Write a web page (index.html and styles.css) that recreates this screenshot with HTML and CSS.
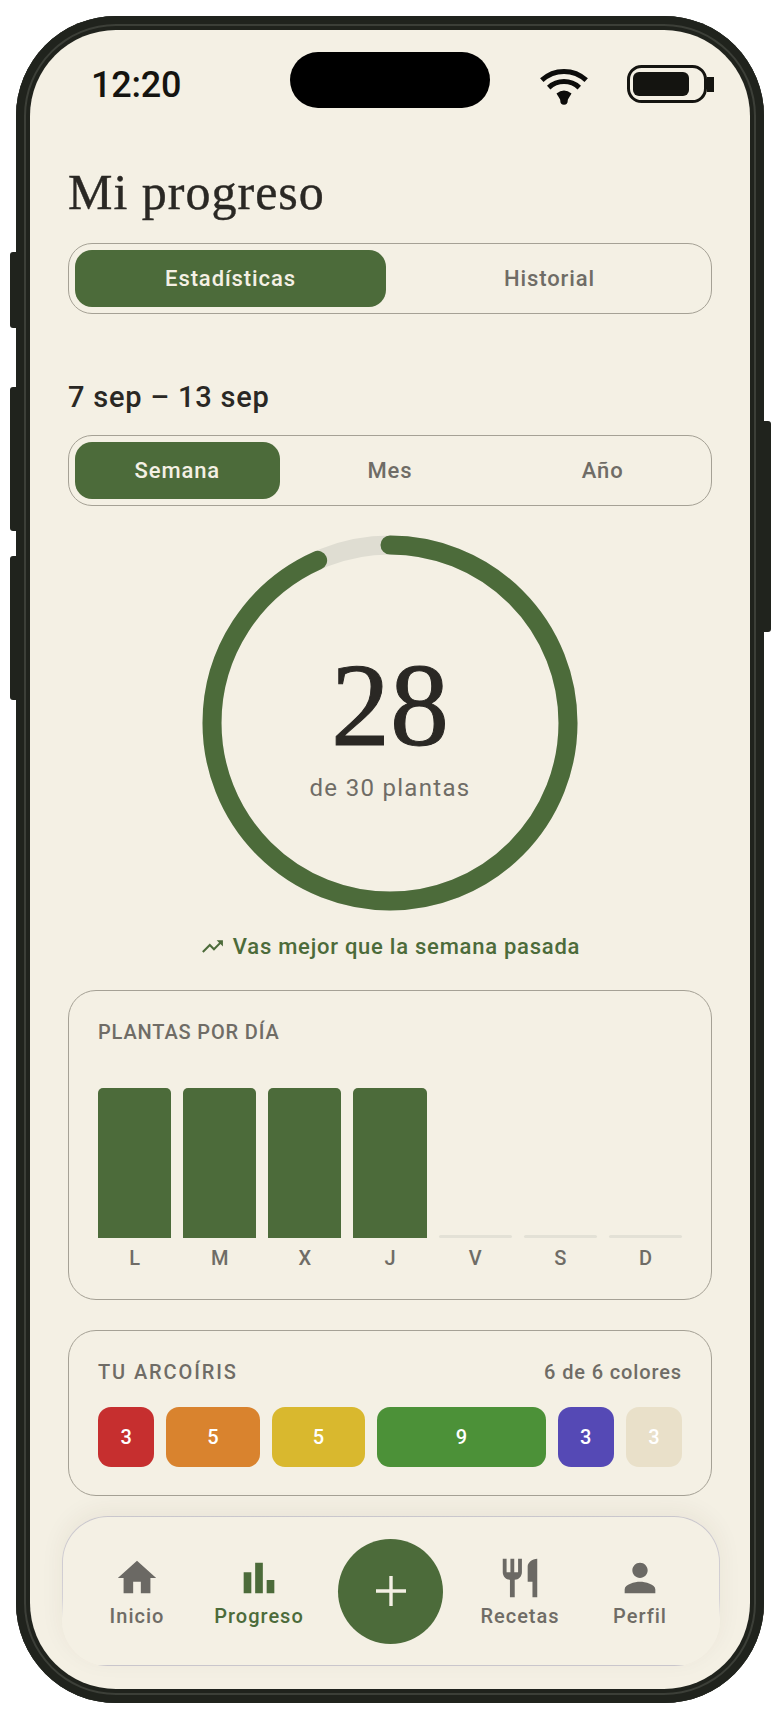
FILE: index.html
```html
<!DOCTYPE html>
<html lang="es">
<head>
<meta charset="utf-8">
<title>Mi progreso</title>
<link rel="stylesheet" href="styles.css">
</head>
<body>
<div class="phone">
  <span class="side-btn side-a"></span>
  <span class="side-btn side-b"></span>
  <span class="side-btn side-c"></span>
  <span class="side-btn side-r"></span>
  <div class="screen">
    <header class="status">
      <div class="time">12:20</div>
      <div class="island"></div>
      <div class="status-icons">
        <svg class="wifi" viewBox="0 0 46 36" width="46" height="36">
          <path class="wifi-arc" d="M.8 11.200 A32.500 32.500 0 0 1 45.200 11.200"/>
          <path class="wifi-arc" d="M7.700 18.600 A22.500 22.500 0 0 1 38.300 18.600"/>
          <path class="wifi-fill" d="M15.500 24.500 Q23 18.500 30.500 24.500 L26 32 L20 32 Z"/>
          <circle class="wifi-fill" cx="23" cy="32" r="3.700"/>
        </svg>
        <svg class="battery" viewBox="0 0 87 38" width="87" height="38">
          <rect class="batt-case" x="1.500" y="1.500" width="77" height="35" rx="13"/>
          <rect class="batt-fill" x="6" y="7" width="56" height="24" rx="6"/>
          <rect class="batt-fill" x="80" y="12" width="7" height="15"/>
        </svg>
      </div>
    </header>

    <main class="content">
      <h1 class="title">Mi progreso</h1>
      <div class="seg seg-two">
        <div class="seg-item active">Estadísticas</div>
        <div class="seg-item">Historial</div>
      </div>

      <h2 class="date">7 sep – 13 sep</h2>
      <div class="seg seg-three">
        <div class="seg-item active">Semana</div>
        <div class="seg-item">Mes</div>
        <div class="seg-item">Año</div>
      </div>

      <div class="ring">
        <svg class="ring-svg" viewBox="0 0 376 376" width="376" height="376">
          <circle class="ring-track" cx="188" cy="188" r="178"/>
          <circle class="ring-value" cx="188" cy="188" r="178" pathLength="30" stroke-dasharray="28 30" transform="rotate(-90 188 188)"/>
        </svg>
        <div class="ring-text">
          <div class="ring-num">28</div>
          <div class="ring-sub">de 30 plantas</div>
        </div>
      </div>

      <div class="trend">
        <svg class="trend-icon" viewBox="0 0 24 24" width="25" height="25"><path d="M16 6l2.290 2.290-4.880 4.880-4-4L2 16.590 3.410 18l6-6 4 4 6.300-6.290L22 12V6z"/></svg>
        <span>Vas mejor que la semana pasada</span>
      </div>

      <section class="card card-bars">
        <div class="card-title">PLANTAS POR DÍA</div>
        <div class="bars">
          <div class="bar-col"><div class="bar-area"><div class="bar full"></div></div><div class="bar-label">L</div></div>
          <div class="bar-col"><div class="bar-area"><div class="bar full"></div></div><div class="bar-label">M</div></div>
          <div class="bar-col"><div class="bar-area"><div class="bar full"></div></div><div class="bar-label">X</div></div>
          <div class="bar-col"><div class="bar-area"><div class="bar full"></div></div><div class="bar-label">J</div></div>
          <div class="bar-col"><div class="bar-area"><div class="bar empty"></div></div><div class="bar-label">V</div></div>
          <div class="bar-col"><div class="bar-area"><div class="bar empty"></div></div><div class="bar-label">S</div></div>
          <div class="bar-col"><div class="bar-area"><div class="bar empty"></div></div><div class="bar-label">D</div></div>
        </div>
      </section>

      <section class="card card-rainbow">
        <div class="card-head">
          <div class="card-title wide">TU ARCOÍRIS</div>
          <div class="card-note">6 de 6 colores</div>
        </div>
        <div class="rainbow">
          <div class="chip red" style="flex-grow:3">3</div>
          <div class="chip orange" style="flex-grow:5">5</div>
          <div class="chip yellow" style="flex-grow:5">5</div>
          <div class="chip green" style="flex-grow:9">9</div>
          <div class="chip purple" style="flex-grow:3">3</div>
          <div class="chip cream" style="flex-grow:3">3</div>
        </div>
      </section>
    </main>

    <nav class="nav">
      <div class="nav-item">
        <svg class="nav-icon" viewBox="0 0 24 24"><path d="M10 20v-6h4v6h5v-8h3L12 3 2 12h3v8z"/></svg>
        <span>Inicio</span>
      </div>
      <div class="nav-item current">
        <svg class="nav-icon" viewBox="0 0 24 24"><path d="M4 9h4v11H4zm12 4h4v7h-4zm-6-9h4v16h-4z"/></svg>
        <span>Progreso</span>
      </div>
      <div class="fab">
        <svg class="fab-icon" viewBox="0 0 30 30" width="30" height="30"><path d="M13.300 0h3.400v13.300H30v3.400H16.700V30h-3.400V16.700H0v-3.400h13.300z"/></svg>
      </div>
      <div class="nav-item">
        <svg class="nav-icon" viewBox="0 0 24 24"><path d="M11 9H9V2H7v7H5V2H3v7c0 2.120 1.660 3.840 3.750 3.970V22h2.500v-9.030C11.340 12.840 13 11.120 13 9V2h-2v7zm5-3v8h2.500v8H21V2c-2.760 0-5 2.240-5 4z"/></svg>
        <span>Recetas</span>
      </div>
      <div class="nav-item">
        <svg class="nav-icon" viewBox="0 0 24 24"><path d="M12 12c2.210 0 4-1.790 4-4s-1.790-4-4-4-4 1.790-4 4 1.790 4 4 4zm0 2c-2.670 0-8 1.340-8 4v2h16v-2c0-2.660-5.330-4-8-4z"/></svg>
        <span>Perfil</span>
      </div>
    </nav>
  </div>
</div>
</body>
</html>
```

FILE: styles.css
```css
* { box-sizing: border-box; }
html, body { margin: 0; background: #fff; }
body {
  padding: 16px;
  font-family: Roboto, "Liberation Sans", sans-serif;
  color: #2a2824;
}

.phone {
  position: relative;
  width: 748px;
  height: 1687px;
  padding: 14px;
  border-radius: 100px;
  background: #20231d;
  box-shadow: inset 0 0 0 8px #20231d, inset 0 0 0 10px #3c3f38;
}
.side-btn { position: absolute; width: 7px; background: #20231d; }
.side-a { left: -6px; top: 236px; height: 76px; border-radius: 3px 0 0 3px; }
.side-b { left: -6px; top: 371px; height: 144px; border-radius: 3px 0 0 3px; }
.side-c { left: -6px; top: 540px; height: 144px; border-radius: 3px 0 0 3px; }
.side-r { right: -7px; top: 405px; height: 211px; border-radius: 0 3px 3px 0; }

.screen {
  height: 1659px;
  border-radius: 86px;
  background: #f4f0e4;
  overflow: hidden;
}

.status {
  display: grid;
  grid-template-columns: 1fr 200px 1fr;
  align-items: center;
  padding-top: 22px;
}
.time {
  padding-left: 61px;
  font-size: 36px;
  font-weight: 500;
  letter-spacing: -0.2px;
  color: #141410;
  margin-top: 9px;
}
.island { height: 56px; border-radius: 28px; background: #000; }
.status-icons {
  display: flex;
  justify-content: flex-end;
  align-items: center;
  gap: 40px;
  padding-right: 36px;
  margin-top: 8px;
}
.wifi { margin-top: 5px; overflow: visible; }
.wifi-arc { fill: none; stroke: #0c0c0a; stroke-width: 5; }
.wifi-fill { fill: #0c0c0a; }
.batt-case { fill: none; stroke: #141410; stroke-width: 3; }
.batt-fill { fill: #141410; }

.content { padding: 0 38px; }
.title {
  margin: 54px 0 21px;
  font-family: "Liberation Serif", serif;
  font-size: 50px;
  line-height: 60px;
  font-weight: 400;
  letter-spacing: 1px;
  -webkit-text-stroke: 0.4px #2a2824;
  color: #2a2824;
}

.seg {
  display: grid;
  gap: 8px;
  height: 71px;
  padding: 6px;
  border: 1px solid #a5a195;
  border-radius: 24px;
}
.seg-two { grid-template-columns: 1fr 1fr; }
.seg-three { grid-template-columns: 1fr 1fr 1fr; }
.seg-item {
  display: flex;
  align-items: center;
  justify-content: center;
  border-radius: 17px;
  font-size: 22px;
  font-weight: 500;
  letter-spacing: 0.9px;
  color: #6f6c66;
}
.seg-item.active { background: #4c6b3a; color: #f4f0e4; }

.date {
  margin: 65px 0 20px;
  font-size: 29px;
  line-height: 36px;
  font-weight: 500;
  letter-spacing: 0.8px;
  color: #2a2824;
}

.ring {
  display: grid;
  width: 376px;
  height: 376px;
  margin: 29px auto 0;
}
.ring-svg, .ring-text { grid-area: 1 / 1; }
.ring-track { fill: none; stroke: #dfddd2; stroke-width: 19; }
.ring-value { fill: none; stroke: #4c6b3a; stroke-width: 19; stroke-linecap: round; }
.ring-text {
  display: flex;
  flex-direction: column;
  align-items: center;
  padding-top: 112px;
}
.ring-num {
  font-family: "Liberation Serif", serif;
  font-size: 118px;
  line-height: 118px;
  -webkit-text-stroke: 1px #2a2824;
  color: #2a2824;
}
.ring-sub {
  margin-top: 8px;
  font-size: 24px;
  line-height: 30px;
  letter-spacing: 1.3px;
  color: #6f6c66;
}

.trend {
  display: flex;
  align-items: center;
  justify-content: center;
  gap: 8px;
  height: 28px;
  margin-top: 21px;
  font-size: 22px;
  font-weight: 500;
  letter-spacing: 0.75px;
  color: #4c6b3a;
}
.trend-icon { fill: #4c6b3a; }

.card {
  border: 1px solid #a5a195;
  border-radius: 28px;
  padding: 0 29px;
}
.card-bars { height: 310px; margin-top: 30px; padding-top: 29px; }
.card-rainbow { height: 166px; margin-top: 30px; padding-top: 29px; }
.card-title {
  font-size: 20px;
  line-height: 24px;
  font-weight: 500;
  letter-spacing: 0.85px;
  color: #6f6c66;
}
.card-title.wide { letter-spacing: 1.9px; }
.card-head { display: flex; justify-content: space-between; }
.card-note {
  font-size: 20px;
  line-height: 24px;
  font-weight: 500;
  letter-spacing: 0.87px;
  color: #6f6c66;
}

.bars { display: flex; gap: 12px; margin-top: 44px; }
.bar-col { flex: 1 1 0; display: flex; flex-direction: column; }
.bar-area { height: 150px; display: flex; align-items: flex-end; }
.bar { width: 100%; }
.bar.full { height: 150px; background: #4c6b3a; border-radius: 5px 5px 0 0; }
.bar.empty { height: 3px; background: #e3e1d6; border-radius: 2px; }
.bar-label {
  margin-top: 8px;
  text-align: center;
  font-size: 20px;
  line-height: 24px;
  font-weight: 500;
  color: #6f6c66;
}

.rainbow { display: flex; gap: 12px; margin-top: 23px; }
.chip {
  flex-basis: 0;
  height: 60px;
  display: flex;
  align-items: center;
  justify-content: center;
  border-radius: 13px;
  font-size: 20px;
  font-weight: 500;
  color: #fff;
}
.red { background: #c62f2f; }
.orange { background: #d9832e; }
.yellow { background: #d9b82e; }
.green { background: #4c9138; }
.purple { background: #5549b5; }
.cream { background: #e9e0c9; }

.nav {
  display: grid;
  grid-template-columns: 122px 122px 141px 118px 122px;
  align-items: center;
  height: 150px;
  margin: 20px 30px 0 32px;
  padding-left: 13px;
  border: 1px solid transparent;
  border-radius: 46px;
  background:
    linear-gradient(#f4f0e4, #f4f0e4) padding-box,
    linear-gradient(#c9c6cc 0%, #d4d1d6 55%, #f4f0e4 68%, #f4f0e4 99%, #c9c6cc 99.3%) border-box;
  box-shadow: 0 -6px 24px rgba(60, 55, 40, 0.06);
}
.nav-item {
  display: flex;
  flex-direction: column;
  align-items: center;
  gap: 3px;
  font-size: 20px;
  line-height: 24px;
  font-weight: 500;
  letter-spacing: 1px;
  color: #6f6c66;
}
.nav-icon { width: 46px; height: 46px; fill: #6b6964; }
.nav-item.current { color: #4c6b3a; }
.nav-item.current .nav-icon { fill: #4c6b3a; }
.fab {
  justify-self: center;
  display: flex;
  align-items: center;
  justify-content: center;
  width: 105px;
  height: 105px;
  border-radius: 50%;
  background: #4c6b3a;
}
.fab-icon { fill: #f4f0e4; }
```
